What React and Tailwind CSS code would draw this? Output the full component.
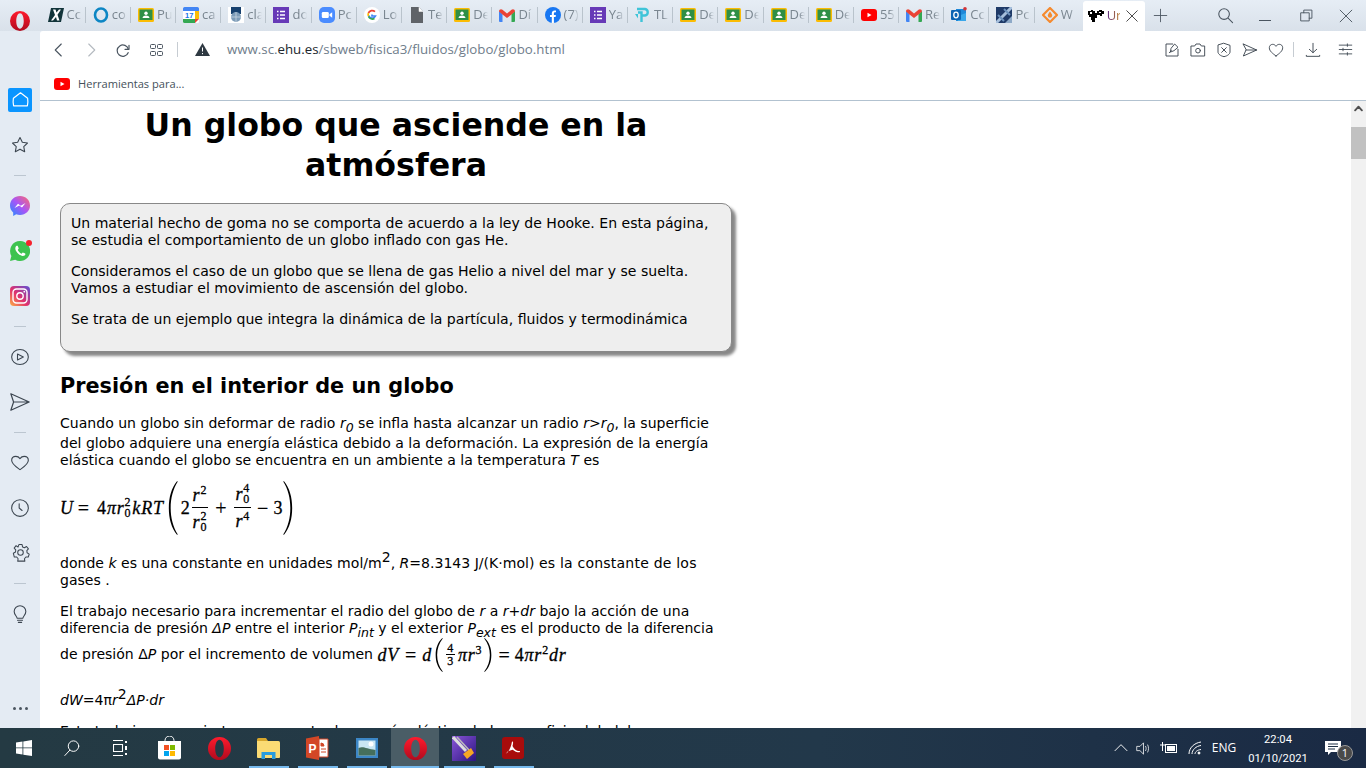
import React from "react";

const S = ({ size = 16, vb = "0 0 24 24", sw = 1.6, color = "#3c4650", children, className = "" }) => (
  <svg width={size} height={size} viewBox={vb} fill="none" stroke={color} strokeWidth={sw} strokeLinecap="round" strokeLinejoin="round" className={className}>{children}</svg>
);

const Classroom = () => (
  <svg width="16" height="14" viewBox="0 0 16 14"><rect width="16" height="14" rx="1.5" fill="#fbbc04" /><rect x="1.5" y="1.5" width="13" height="10.5" fill="#2f8f46" /><circle cx="8" cy="5.2" r="1.7" fill="#fff" /><path d="M4.5 10c.4-2 2-2.6 3.5-2.6s3.1.6 3.5 2.6z" fill="#fff" /></svg>
);
const XIcon = () => (
  <svg width="16" height="14" viewBox="0 0 16 14"><path d="M3 0h13L13 14H0z" fill="#12343a" /><path d="M5 1.5h2.500l1 3 2.500-3h2L9.500 6.800 11.500 12.500H9L8 9l-3 3.500H3L7 7z" fill="#fff" /></svg>
);
const Ring = () => (<svg width="16" height="16" viewBox="0 0 16 16"><ellipse cx="8" cy="8" rx="6" ry="6.5" fill="none" stroke="#0d86c4" strokeWidth="2.6" /></svg>);
const Cal = () => (
  <svg width="16" height="16" viewBox="0 0 16 16"><rect width="16" height="16" rx="1.5" fill="#fff" /><path d="M0 12h12v4H1.500A1.500 1.500 0 0 1 0 14.500z" fill="#34a853" /><path d="M12 12h4L12 16z" fill="#ea4335" /><path d="M12 4h4v8h-4z" fill="#fbbc04" /><path d="M0 1.500A1.500 1.500 0 0 1 1.500 0H14.500A1.500 1.500 0 0 1 16 1.500V4H0z" fill="#4285f4" /><text x="6.2" y="11" fontSize="7.5" fontWeight="700" textAnchor="middle" fontFamily="Liberation Sans" fill="#1a73e8">17</text></svg>
);
const Ehu = () => (
  <svg width="16" height="16" viewBox="0 0 16 16"><rect width="16" height="16" fill="#fff" /><path d="M3 0h10v7H3z" fill="#16406e" /><circle cx="8" cy="10" r="5" fill="#7d9cb8" /><path d="M3 10h10M8 5v10" stroke="#c8d6e2" strokeWidth=".8" /></svg>
);
const Forms = () => (
  <svg width="16" height="16" viewBox="0 0 16 16"><rect width="16" height="16" fill="#673ab7" /><path d="M4 4.500h1.500M7 4.500h5M4 8h1.500M7 8h5M4 11.500h1.500M7 11.500h5" stroke="#fff" strokeWidth="1.5" /></svg>
);
const Zoom = () => (
  <svg width="16" height="16" viewBox="0 0 16 16"><rect width="16" height="16" rx="5" fill="#4a8cff" /><rect x="2.8" y="5" width="7" height="6" rx="1.3" fill="#fff" /><path d="M10.500 7.200 13.200 5.200v5.600L10.500 8.800z" fill="#fff" /></svg>
);
const Goog = () => (
  <svg width="16" height="16" viewBox="0 0 16 16"><circle cx="8" cy="8" r="8" fill="#fff" /><path d="M8 7.500v1.500h3.500a3.600 3.600 0 0 1-6.800-.6" fill="none" stroke="#4285f4" strokeWidth="1.7" /><path d="M11 4.600A4.300 4.300 0 0 0 4.400 6" fill="none" stroke="#ea4335" strokeWidth="1.7" /><path d="M4.400 6a4.300 4.300 0 0 0 0 3" fill="none" stroke="#fbbc04" strokeWidth="1.7" /><path d="M4.500 9.500A4.300 4.300 0 0 0 10.500 11.500" fill="none" stroke="#34a853" strokeWidth="1.7" /></svg>
);
const Doc = () => (<svg width="14" height="16" viewBox="0 0 14 16"><path d="M1 0h8l4 4.500V16H1z" fill="#5f6368" /><path d="M9 0v4.500h4" fill="#fff" stroke="#fff" strokeWidth=".5" /></svg>);
const Gmail = () => (
  <svg width="16" height="13" viewBox="0 0 16 13"><path d="M0 2v10a1 1 0 0 0 1 1h2.500V5z" fill="#4285f4" /><path d="M16 2v10a1 1 0 0 1-1 1h-2.500V5z" fill="#34a853" /><path d="M0 2.500C0 .5 2 -.5 3.500 .8L8 4.500 12.500 .8C14 -.5 16 .5 16 2.500L12.500 5.500 8 9 3.500 5.500z" fill="#ea4335" /></svg>
);
const Fb = () => (
  <svg width="16" height="16" viewBox="0 0 16 16"><circle cx="8" cy="8" r="8" fill="#1877f2" /><path d="M6.800 16V10H5V8h1.800V6.300C6.800 4.400 7.900 3.400 9.600 3.400c.7 0 1.400.1 1.400.1v1.800h-.9c-.9 0-1.200.6-1.200 1.200V8h2l-.3 2H8.900v6z" fill="#fff" /></svg>
);
const Tp = () => (
  <svg width="16" height="16" viewBox="0 0 16 16" fill="none"><path d="M6.500 15V5.500H3M6.500 8.500h3.500a3.300 3.300 0 0 0 0-6.500H2" stroke="#3fc4d8" strokeWidth="2.4" /><path d="M0 7h3v4.500z" fill="#3fc4d8" /></svg>
);
const Yt = () => (
  <svg width="16" height="12" viewBox="0 0 16 12"><rect width="16" height="12" rx="3" fill="#f00" /><path d="M6.500 3.800 10.500 6l-4 2.200z" fill="#fff" /></svg>
);
const Outlook = () => (
  <svg width="16" height="16" viewBox="0 0 16 16"><path d="M5 2h10v12H5z" fill="#1e88d8" /><path d="M7 9l8-3v8H7z" fill="#39a7ea" /><rect x="0" y="3" width="10" height="10" rx="1" fill="#0c64b3" /><ellipse cx="5" cy="8" rx="2.2" ry="2.8" fill="none" stroke="#fff" strokeWidth="1.3" /><circle cx="14" cy="1.800" r="1.8" fill="#d13438" /></svg>
);
const Sat = () => (
  <svg width="16" height="16" viewBox="0 0 16 16"><rect width="16" height="16" fill="#1f3a68" /><path d="M0 16 16 0" stroke="#a5bedb" strokeWidth="3" /><path d="M2 8 8 14M8 2l6 6" stroke="#6c92bd" strokeWidth="2" /><path d="M9 16h7V9z" fill="#8ea9c7" /></svg>
);
const Wd = () => (
  <svg width="16" height="16" viewBox="0 0 16 16"><path d="M8 1 15 8 8 15 1 8z" fill="none" stroke="#f58a2e" strokeWidth="2.2" /><path d="M8 4.500c1.500 2 2.200 3 2.200 4a2.200 2.200 0 0 1-4.400 0c0-1 .7-2 2.200-4z" fill="#f58a2e" /></svg>
);
const Ehu2 = () => (
  <svg width="16" height="12" viewBox="0 0 16 12"><path d="M0 1h3V0h2v1h2v2h2V1h2V0h3v1h2v3h-2v2h-2V5H9v3H7v4H4v-2H3V7H1V5H0z" fill="#000" /><path d="M2 2h2v2H2zM11 2h2v1h-2z" fill="#fff" /></svg>
);

const tabs = [
  [XIcon, "Cc"], [Ring, "co"], [Classroom, "Pu"], [Cal, "ca"], [Ehu, "cla"], [Forms, "do"], [Zoom, "Pc"], [Goog, "Lo"], [Doc, "Te"],
  [Classroom, "De"], [Gmail, "Dí"], [Fb, "(7)"], [Forms, "Ya"], [Tp, "TL"], [Classroom, "De"], [Classroom, "De"], [Classroom, "De"], [Classroom, "De"],
  [Yt, "55"], [Gmail, "Re"], [Outlook, "Cc"], [Sat, "Pc"],
];

const Tab = ({ Icon, label, last }) => (
  <div className={`${last ? "w-[48px]" : "w-[45.2px] border-r border-[#b9c3cc]"} h-[16px] shrink-0 flex items-center pl-[7px]`}>
    <div className="w-[16px] flex justify-center shrink-0"><Icon /></div>
    <span className="ml-[3px] w-[15px] overflow-hidden whitespace-nowrap text-[13px] text-[#7a8690] [mask-image:linear-gradient(90deg,#000_60%,transparent)]">{label}</span>
  </div>
);

const Sep = () => (
  <div className="h-4 flex items-center shrink-0"><div className="w-3 h-px bg-[#bcc6d0]" /></div>
);
const Side = ({ children }) => <div className="h-[45px] shrink-0 flex items-center justify-center">{children}</div>;

const Sidebar = () => (
  <div className="w-10 shrink-0 flex flex-col items-center pt-[46px] pb-[8px]">
    <Side>
      <div className="w-6 h-6 bg-[#0a95ff] rounded-[2px] flex items-center justify-center">
        <S size={19} color="#fff" sw={1.5}><path d="M12 3.500 21 10.500c.6 3.500.4 6.500-.3 9.500H3.300C2.600 17 2.400 14 3 10.500z" /></S>
      </div>
    </Side>
    <Side><S size={20} sw={1.3}><path d="M12 3l2.800 5.800 6.200.8-4.500 4.300 1.100 6.100-5.600-3-5.600 3 1.100-6.100L3 9.600l6.200-.8z" /></S></Side>
    <Sep />
    <Side>
      <svg width="20" height="20" viewBox="0 0 20 20"><defs><linearGradient id="m" x1="0" y1="1" x2="1" y2="0"><stop offset="0" stopColor="#1e8fff" /><stop offset=".5" stopColor="#a855f7" /><stop offset="1" stopColor="#ff6b6b" /></linearGradient></defs><path d="M10 0C4.400 0 0 4 0 9.500c0 2.900 1.200 5.300 3.200 7V20l3-1.700c1.200.4 2.500.6 3.800.6 5.600 0 10-4 10-9.400S15.600 0 10 0z" fill="url(#m)" /><path d="M4.500 12 8 7.800l2.800 2L15.500 7 12 11.500 9.300 9.600z" fill="#fff" /></svg>
    </Side>
    <Side>
      <div className="relative">
        <svg width="20" height="20" viewBox="0 0 20 20"><path d="M10 0a10 10 0 0 0-8.600 15L0 20l5.200-1.300A10 10 0 1 0 10 0z" fill="#3dc34f" /><path d="M6.700 4.800c-.5.200-1.400 1.200-1.400 2.600 0 2.700 3.800 7 7.500 7.700 1.500 0 2.600-1 2.700-2-.1-.5-2.300-1.500-2.700-1.500-.4.100-.8 1.100-1.200 1.100-1.200-.3-3.400-2.400-3.800-3.700 0-.4.900-1 .9-1.400 0-.5-1-2.800-1.300-2.800z" fill="#fff" /></svg>
        <div className="absolute -top-[1px] -right-[2px] w-[6px] h-[6px] rounded-full bg-[#f5222d]" />
      </div>
    </Side>
    <Side>
      <svg width="20" height="20" viewBox="0 0 20 20"><defs><linearGradient id="ig" x1="0" y1="1" x2="1" y2="0"><stop offset="0" stopColor="#fcb045" /><stop offset=".45" stopColor="#e1306c" /><stop offset="1" stopColor="#5b51d8" /></linearGradient></defs><rect width="20" height="20" rx="4" fill="url(#ig)" /><rect x="3" y="3" width="14" height="14" rx="3.5" fill="none" stroke="#fff" strokeWidth="1.4" /><circle cx="10" cy="10" r="3.2" fill="none" stroke="#fff" strokeWidth="1.4" /><circle cx="14.300" cy="5.700" r=".9" fill="#fff" /></svg>
    </Side>
    <Sep />
    <Side><S size={20} sw={1.3}><ellipse cx="12" cy="12" rx="10" ry="9" /><path d="M9 8.500 16 12l-7 3.500z" /></S></Side>
    <Side><S size={22} sw={1.3}><path d="M2 3 22 12 2 21l3-9zM5 12h17" /></S></Side>
    <Sep />
    <Side><S size={20} sw={1.3}><path d="M12 20C7 16.500 2 13.500 2 8.800 2 5.800 4.300 4 7 4c2 0 3.700.9 5 2.700C13.300 4.900 15 4 17 4c2.700 0 5 1.800 5 4.800 0 4.700-5 7.700-10 11.200z" /></S></Side>
    <Side><S size={20} sw={1.3}><circle cx="12" cy="12" r="10" /><path d="M11 7v5l3.500 3" /></S></Side>
    <Side><S size={19} sw={1.3}><circle cx="12" cy="12" r="3.5" /><path d="M10 2h4l.6 3 2.400 1 2.600-1.600 2.400 3-2 2.200.3 2.800 2.700 1.600-1.200 3.700-3 0-1.800 2.200.5 3H8.500l.5-3-1.800-2.200-3 0L3 13l2.700-1.600.3-2.800-2-2.200 2.400-3L9 5z" /></S></Side>
    <Sep />
    <Side><S size={20} sw={1.3}><path d="M8.500 17c-.3-2.500-3.500-4-3.500-8a7 7 0 0 1 14 0c0 4-3.200 5.500-3.500 8zM9 19.500h6M10 22h4" /></S></Side>
    <div className="mt-auto flex gap-[3px] pb-[10px]">
      <div className="w-[3px] h-[3px] rounded-full bg-[#4b5560]" /><div className="w-[3px] h-[3px] rounded-full bg-[#4b5560]" /><div className="w-[3px] h-[3px] rounded-full bg-[#4b5560]" />
    </div>
  </div>
);

const M = ({ children, className = "" }) => (
  <span className={`font-['Liberation_Serif',serif] italic tracking-[0.8px] [-webkit-text-stroke:0.3px_#000] text-black ${className}`}>{children}</span>
);
const R = ({ children, className = "" }) => (
  <span className={`font-['Liberation_Serif',serif] tracking-[0.8px] [-webkit-text-stroke:0.3px_#000] text-black ${className}`}>{children}</span>
);
const Op = ({ children, className = "" }) => (
  <span className={`font-['Liberation_Serif',serif] text-[20px] [-webkit-text-stroke:0.2px_#000] text-black ${className}`}>{children}</span>
);
const R0 = ({ p }) => (
  <span className="inline-flex items-center">
    <M>r</M>
    <span className="inline-flex flex-col text-[12px] leading-[11px]">
      <R>{p}</R><R>0</R>
    </span>
  </span>
);
const RP = ({ p, up = "-mt-[9px]" }) => (
  <span className="inline-flex items-center">
    <M>r</M><span className={`text-[12px] leading-3 ${up}`}><R>{p}</R></span>
  </span>
);
const Frac = ({ a, b, className = "" }) => (
  <span className={`inline-flex flex-col items-center ${className}`}>
    <span className="h-[28px] border-b border-black px-[1px] pb-[2px] flex justify-center items-end">{a}</span>
    <span className="h-[28px] px-[1px] pt-[3px] flex justify-center items-start">{b}</span>
  </span>
);
const Paren = ({ h, w = 10, flip }) => (
  <svg width={w} height={h} viewBox="0 0 12 60" preserveAspectRatio="none" className={`shrink-0 ${flip ? "-scale-x-100" : ""}`}>
    <path d="M11 0C4 8 1 18 1 30s3 22 10 30l.6-.8C6 51 3.200 41 3.200 30S6 9 11.600 .8z" fill="#000" />
  </svg>
);
const Sub = ({ children }) => <sub className="italic align-sub leading-[14px] text-[12.5px] static">{children}</sub>;

const Page = () => (
  <div className="w-[672px] ml-5 font-['DejaVu_Sans',Verdana,sans-serif] text-[14.05px] leading-[17px] text-black">
    <h1 className="mt-[4px] text-center font-bold text-[31.6px] leading-10 px-[40px]">Un globo que asciende en la atmósfera</h1>
    <div className="mt-[18px] h-[149px] border border-[#888] rounded-[10px] bg-[#eeeeee] shadow-[4px_4px_3px_#888] px-[10px] pt-[11px]">
      <p>Un material hecho de goma no se comporta de acuerdo a la ley de Hooke. En esta página, se estudia el comportamiento de un globo inflado con gas He.</p>
      <p className="mt-[14px]">Consideramos el caso de un globo que se llena de gas Helio a nivel del mar y se suelta. Vamos a estudiar el movimiento de ascensión del globo.</p>
      <p className="mt-[14px]">Se trata de un ejemplo que integra la dinámica de la partícula, fluidos y termodinámica</p>
    </div>
    <h2 className="mt-[21px] font-bold text-[20.8px] leading-[26px]">Presión en el interior de un globo</h2>
    <p className="mt-4">Cuando un globo sin deformar de radio <i>r<Sub>0</Sub></i> se infla hasta alcanzar un radio <i>r&gt;r<Sub>0</Sub></i>, la superficie del globo adquiere una energía elástica debido a la deformación. La expresión de la energía elástica cuando el globo se encuentra en un ambiente a la temperatura <i>T</i> es</p>
    <div className="mt-[6px] h-[66px] flex items-center text-[18px] leading-5">
      <M>U</M><Op className="ml-[4px] mr-[8px]">=</Op><R>4</R><M>π</M><R0 p="2" /><M className="ml-px">kRT</M>
      <span className="ml-[4px]"><Paren h={54} /></span>
      <R className="ml-[3px]">2</R>
      <Frac className="ml-[1px]" a={<RP p="2" />} b={<R0 p="2" />} />
      <Op className="ml-[7px]">+</Op>
      <Frac className="ml-[8px]" a={<R0 p="4" />} b={<RP p="4" />} />
      <Op className="ml-[6px]">−</Op><R className="ml-[5px]">3</R>
      <Paren h={54} flip />
    </div>
    <p className="mt-[14px]">donde <i>k</i> es una constante en unidades mol/m<sup className="text-[14px] -top-[6px]">2</sup>, <i>R</i>=8.3143 J/(K·mol) <span className="tracking-[0.2px]">es la constante de los</span> gases .</p>
    <p className="mt-[14px]">El trabajo necesario para incrementar el radio del globo de <i>r</i> a <i>r+dr</i> bajo la acción de una diferencia de presión <i>ΔP</i> entre el interior <i>P<Sub>int</Sub></i> y el exterior <i>P<Sub>ext</Sub></i> es el producto de la diferencia</p>
    <div className="h-[30px] flex items-center whitespace-nowrap">
      <span>de presión Δ<i>P</i> por el incremento de volumen&nbsp;</span>
      <span className="inline-flex items-center text-[18px] leading-4">
        <M>dV</M><Op className="mx-[6px]">=</Op><M>d</M>
        <span className="ml-[3px]"><Paren h={34} w={8} /></span>
        <span className="inline-flex flex-col items-center text-[12px] leading-[12px] mx-[3px]"><span className="border-b border-black px-px"><R>4</R></span><R>3</R></span>
        <M>π</M><RP p="3" />
        <span className="ml-[2px]"><Paren h={34} w={8} flip /></span>
        <Op className="ml-[6px] mr-[5px]">=</Op><R>4</R><M>π</M><RP p="2" /><M>dr</M>
      </span>
    </div>
    <p className="mt-[22px]"><i>dW</i>=4π<i>r</i><sup className="text-[14px] -top-[6px]">2</sup><i>ΔP·dr</i></p>
    <p className="mt-[14px] whitespace-nowrap">Este trabajo se convierte en aumento de energía elástica de la superficie del globo</p>
  </div>
);

const TB = ({ w = "w-[49.2px]", line, active, children }) => (
  <div className={`${w} h-10 shrink-0 relative flex items-center justify-center ${active ? "bg-[#4a5d66]" : ""}`}>
    {children}
    {line && <div className={`absolute bottom-0 h-[2px] bg-[#76b9ed] ${active ? "left-0 right-0" : "left-[5px] right-[4px]"}`} />}
  </div>
);
const OperaO = ({ size = 22 }) => (
  <svg width={size} height={size} viewBox="0 0 24 24"><defs><linearGradient id={`o${size}`} x1="0" y1="0" x2="0" y2="1"><stop offset="0" stopColor="#ff1b2d" /><stop offset="1" stopColor="#b00b1e" /></linearGradient></defs><path fillRule="evenodd" d="M12 0a12 12 0 1 0 0 24 12 12 0 0 0 0-24zm0 2.800c2.700 0 4.500 4.200 4.500 9.200s-1.800 9.200-4.500 9.200-4.500-4.200-4.500-9.200 1.800-9.200 4.500-9.200z" fill={`url(#o${size})`} /></svg>
);

const Taskbar = () => (
  <div className="h-10 shrink-0 flex bg-[linear-gradient(90deg,#243a43,#22384a_60%,#1a2a44)] text-white font-['Open_Sans',sans-serif]">
    <TB w="w-12">
      <svg width="16" height="16" viewBox="0 0 16 16" fill="#fff"><path d="M0 2.400 6.500 1.500v6H0zM7.300 1.400 16 0v7.500H7.300zM0 8.300h6.500v6.200L0 13.600zM7.300 8.300H16V16L7.300 14.700z" /></svg>
    </TB>
    <TB w="w-12"><S size={18} color="#fff" sw={1.3}><circle cx="14" cy="9.500" r="7" /><path d="M9 15 2.500 22" /></S></TB>
    <TB w="w-12">
      <svg width="16" height="16" viewBox="0 0 16 16" fill="none" stroke="#fff" strokeWidth="1.1" className="ml-[2px]"><path d="M0 .5h10M0 15.500h10M.5 4.500h9v7h-9z" /><path d="M13 1v2M13 6v4M13 13v2" strokeWidth="2" /></svg>
    </TB>
    <div className="w-[1.4px] shrink-0" />
    <TB>
      <svg width="23" height="24" viewBox="0 0 23 24"><path d="M7 6V4.500a4.500 4.500 0 0 1 9 0V6" fill="none" stroke="#fff" strokeWidth="1" /><path d="M0 5h23v16.500a2 2 0 0 1-2 2H2a2 2 0 0 1-2-2z" fill="#fff" /><path d="M6 9h5v5H6z" fill="#f25022" /><path d="M12 9h5v5h-5z" fill="#7fba00" /><path d="M6 15h5v5H6z" fill="#00a4ef" /><path d="M12 15h5v5h-5z" fill="#ffb900" /></svg>
    </TB>
    <TB><OperaO size={23} /></TB>
    <TB line>
      <svg width="23" height="21" viewBox="0 0 23 21"><path d="M0 1.500A1.500 1.500 0 0 1 1.500 0H9l2 3H0z" fill="#d8a72c" /><path d="M0 3h21.500A1.500 1.500 0 0 1 23 4.500V19a1 1 0 0 1-1 1H1a1 1 0 0 1-1-1z" fill="#fbdb74" /><path d="M4.500 14H18.500V21H15v-4H8v4H4.500z" fill="#2a9cdd" /></svg>
    </TB>
    <TB line>
      <svg width="23" height="24" viewBox="0 0 23 24"><path d="M13 0v24L0 21.500V2.500z" fill="#d24726" /><path d="M13 3h9v18h-9z" fill="#fff" stroke="#d24726" /><path d="M15 7a3 3 0 0 1 3 3h-3zM15 13h5M15 16h5" stroke="#d24726" fill="#d24726" /><text x="6.5" y="16.5" fontSize="12" fontWeight="700" textAnchor="middle" fontFamily="Liberation Sans" fill="#fff">P</text></svg>
    </TB>
    <TB line>
      <svg width="22" height="20" viewBox="0 0 22 20"><rect width="22" height="20" fill="#3c87c7" /><rect x="2.5" y="2.5" width="17" height="15" fill="#c9e6f2" /><path d="M2.500 10c5-2 8 1 17 2v5.500h-17z" fill="#456f5c" /><circle cx="15" cy="6" r="2.5" fill="#fff" /></svg>
    </TB>
    <TB w="w-12" line active><OperaO size={23} /></TB>
    <TB line>
      <svg width="24" height="25" viewBox="0 0 24 25"><defs><linearGradient id="vp" x1="0" y1="0" x2="1" y2="1"><stop offset="0" stopColor="#8a55d8" /><stop offset="1" stopColor="#2b1580" /></linearGradient></defs><rect width="24" height="25" fill="url(#vp)" /><path d="M1 1l13 14" stroke="#ddd" strokeWidth="3" fill="none" /><path d="M5 1l12 13" stroke="#bbb" strokeWidth="1.5" fill="none" /><path d="M11 18l8-6 3 5-7 6z" fill="#f6a623" /></svg>
    </TB>
    <TB line>
      <svg width="22" height="22" viewBox="0 0 22 22"><rect width="22" height="22" rx="3" fill="#a80c0c" /><path d="M4 16.500c2-1 4.500-5 5.500-9.500.2-1 .2-2.500 1-2.500s.8 2 0 4.500c2 3.500 3.500 5 7 5 .8 0 .8 1.300-.5 1.300-2 0-4.500-1-6.300-2.600-2 .5-4 1-5.300 2-.8 1.300-1.700 2.300-1.400 1.800z" fill="#fff" /></svg>
    </TB>
    <div className="ml-auto flex items-center">
      <div className="w-[20px] flex justify-center"><S size={16} color="#fff" sw={1.4}><path d="M3 16 12 7l9 9" /></S></div>
      <div className="w-[24px] flex justify-center"><S size={17} color="#fff" sw={1.1}><path d="M3 9h4l5-5v16l-5-5H3zM15 9c1 2 1 4 0 6M18 7c1.500 3 1.500 7 0 10" /></S></div>
      <div className="w-[28px] flex justify-center">
        <svg width="18" height="12" viewBox="0 0 18 12" fill="none" stroke="#fff"><rect x="5.5" y="2.5" width="11" height="8" /><rect x="7" y="4" width="8" height="5" fill="#fff" stroke="none" /><path d="M0 3h5M2.500 0v3M2.500 3v6" /></svg>
      </div>
      <div className="w-[24px] flex justify-center">
        <svg width="14" height="14" viewBox="0 0 14 14" fill="none" stroke="#fff"><path d="M1 13C1 7 6 2 13 1M4 13C4 9 8 5 13 4.500M7 13c0-2 2-4 6-4.500" /><circle cx="11" cy="12" r="1" fill="#fff" /></svg>
      </div>
      <div className="w-[34px] text-center text-[12px] -mt-px">ENG</div>
      <div className="w-[72px] pl-[2px] text-center text-[11.2px] leading-[19px] pt-px font-['Roboto',sans-serif]"><div>22:04</div><div>01/10/2021</div></div>
      <div className="w-[40px] mr-[13px] relative flex justify-center">
        <svg width="16" height="15" viewBox="0 0 16 15"><path d="M0 0h16v11H6l-3 3v-3H0z" fill="#fff" /><path d="M3 3h10M3 5.500h10M3 8h7" stroke="#1c2e44" /></svg>
        <div className="absolute left-[24px] top-[4px] w-4 h-4 rounded-full bg-[#4a4a4a] border border-[#999] text-[11px] leading-[14px] text-center">1</div>
      </div>
    </div>
  </div>
);

export default function App() {
  return (
    <div className="w-[1366px] h-[768px] overflow-hidden flex flex-col bg-[#e4ebf3] font-['Open_Sans',sans-serif]">
      <div className="flex-1 min-h-0 flex flex-col">
        <div className="h-[31px] shrink-0 flex items-center bg-[linear-gradient(180deg,#e6edf5,#d9e1ea)]">
          <div className="w-[40.5px] shrink-0 flex justify-center pt-[10px]"><OperaO size={20} /></div>
          <div className="flex items-center -mt-[1px]">
            {tabs.map(([I, l], i) => <Tab key={i} Icon={I} label={l} />)}
            <Tab Icon={Wd} label="W" last />
          </div>
          <div className="w-[62px] h-[31px] shrink-0 bg-white rounded-t-[3px] flex items-center pl-[5px] -mb-px">
            <Ehu2 />
            <span className="ml-[3px] w-[13px] overflow-hidden text-[13px] bg-[linear-gradient(90deg,#5b2a86,#c0842b)] bg-clip-text text-transparent">Ur</span>
            <S size={14} color="#333" sw={1.5} className="ml-[5px]"><path d="M3 3l18 18M21 3 3 21" /></S>
          </div>
          <div className="w-[32px] flex justify-center"><S size={15} color="#4a5560" sw={1.4}><path d="M12 2v20M2 12h20" /></S></div>
          <div className="ml-auto flex items-center">
            <div className="w-[40px] flex justify-center"><S size={17} color="#4a5560" sw={1.5}><circle cx="10" cy="10" r="7.5" /><path d="m16 16 6 6" /></S></div>
            <div className="w-[40px] flex justify-center pt-[10px]"><div className="w-3 h-px bg-[#4a5560]" /></div>
            <div className="w-[40px] ml-px flex justify-center"><S size={13} color="#4a5560" sw={1.7}><path d="M2 7h15v15H2zM7 7V2h15v15h-5" /></S></div>
            <div className="w-[40px] flex justify-center"><S size={14} color="#4a5560" sw={1.6}><path d="M2 2l20 20M22 2 2 22" /></S></div>
          </div>
        </div>
        <div className="flex-1 min-h-0 flex">
          <Sidebar />
          <div className="flex-1 min-w-0 bg-white rounded-tl-[3px] flex flex-col">
            <div className="h-[37px] shrink-0 flex items-center">
              <div className="w-9 ml-[1px] flex justify-center"><S size={18} color="#4a5560" sw={1.5}><path d="M15 4 7 12l8 8" /></S></div>
              <div className="w-[28px] flex justify-center"><S size={18} color="#b4bac0" sw={1.5}><path d="M9 4l8 8-8 8" /></S></div>
              <div className="w-[36px] flex justify-center"><S size={16} color="#4a5560" sw={1.8}><path d="M21 5v6h-6" /><path d="M20 11a8.500 8.500 0 1 0-.3 5" /></S></div>
              <div className="w-[26px] ml-[2px] flex justify-center"><svg width="13" height="12" viewBox="0 0 13 12" fill="none" stroke="#4a5560"><rect x=".5" y=".5" width="5" height="4" rx="1" /><rect x="7.5" y=".5" width="5" height="4" rx="1" /><rect x=".5" y="7.5" width="5" height="4" rx="1" /><rect x="7.5" y="7.5" width="5" height="4" rx="1" /></svg></div>
              <div className="w-px h-[15px] ml-[8px] bg-[#c6ccd2]" />
              <div className="ml-[17px]"><svg width="15" height="13" viewBox="0 0 15 13"><path d="M7.500 0 15 13H0z" fill="#2e3942" /><path d="M7.500 4.500v4M7.500 10v1.200" stroke="#fff" /></svg></div>
              <div className="ml-[17px] text-[13.28px] text-[#6f7d8b] whitespace-nowrap">www.sc.<span className="text-[#20262c]">ehu.es</span>/sbweb/fisica3/fluidos/globo/globo.html</div>
              <div className="ml-auto flex items-center pr-[4px]">
                <div className="w-[26px] flex justify-center"><S size={16} color="#3c4650" sw={1.4}><path d="M13 3H3v18h18V11" /><path d="M11 9l5-6 5 5-6 5-5 2zM8 16l3-3" /></S></div>
                <div className="w-[26px] flex justify-center"><S size={16} color="#3c4650" sw={1.4}><path d="M2 6h5l2-3h6l2 3h5v15H2z" /><circle cx="12" cy="13" r="3.5" /></S></div>
                <div className="w-[26px] flex justify-center"><S size={16} color="#3c4650" sw={1.4}><path d="M12 2l9 3v10c0 3-4 6-9 7-5-1-9-4-9-7V5z" /><path d="M8.500 8.500l7 7M15.500 8.500l-7 7" /></S></div>
                <div className="w-[26px] flex justify-center"><S size={16} color="#3c4650" sw={1.4}><path d="M2 3l20 9-20 9 4-9zM6 12h16" /></S></div>
                <div className="w-[26px] flex justify-center"><S size={16} color="#3c4650" sw={1.4}><path d="M12 21C7 17 2 14 2 8.500 2 5.500 4.300 3.500 7 3.500c2 0 3.800 1 5 3 1.200-2 3-3 5-3 2.700 0 5 2 5 5C22 14 17 17 12 21z" /></S></div>
                <div className="w-px h-[15px] ml-[4px] mr-[6px] bg-[#c6ccd2]" />
                <div className="w-[26px] flex justify-center"><S size={16} color="#3c4650" sw={1.4}><path d="M12 2v14M6.500 11l5.500 5 5.500-5M2 20v1.500h20V20" /></S></div>
                <div className="w-[34px] ml-[2px] flex justify-center"><S size={15} color="#3c4650" sw={1.4}><path d="M2 5h20M2 12h20M2 19h20" /><path d="M15 3v4M8 10v4M15 17v4" /></S></div>
              </div>
            </div>
            <div className="h-[33px] shrink-0 flex items-center pl-[14px] border-b border-[#b2c2d0]">
              <Yt />
              <span className="ml-2 text-[11.1px] text-[#44505a]">Herramientas para...</span>
            </div>
            <div className="flex-1 min-h-0 flex overflow-hidden">
              <div className="flex-1 min-w-0 overflow-hidden"><Page /></div>
              <div className="w-[15px] shrink-0 bg-[#f1f1f1] flex flex-col items-center">
                <div className="h-[15px] flex items-center justify-center"><S size={9} color="#505050" sw={5}><path d="M3 17 12 7l9 10" /></S></div>
                <div className="mt-[11px] w-full h-[32px] bg-[#c1c1c1]" />
              </div>
            </div>
          </div>
        </div>
      </div>
      <Taskbar />
    </div>
  );
}
